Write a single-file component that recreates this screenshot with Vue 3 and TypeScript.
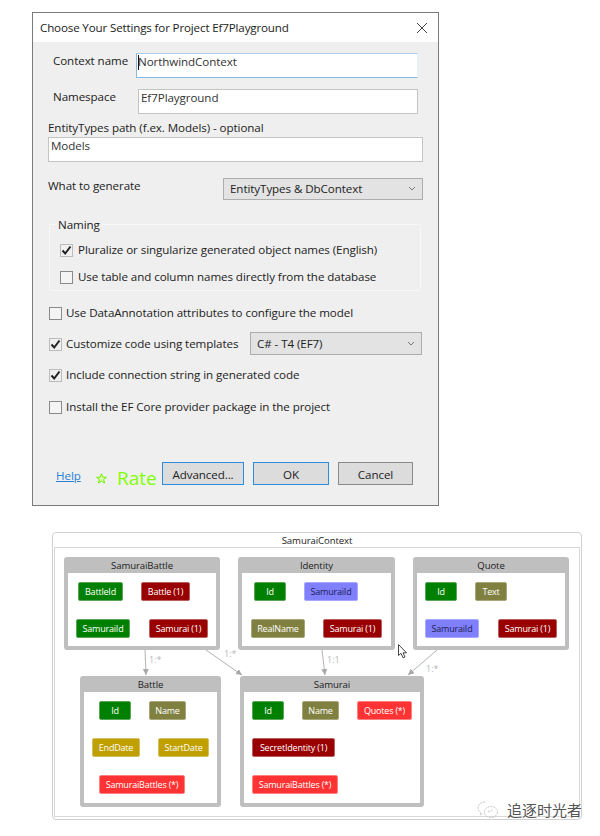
<script setup lang="ts">
interface Chip { t: string; x: number; y: number; w: number; c: string }
interface Node { name: string; x: number; y: number; w: number; h: number; chips: Chip[] }
const G = 'green', R = 'dark', P = 'purple', O = 'olive', Y = 'gold', H = 'hot'
const ox = 53, oy = 533
const nodes: Node[] = [
  { name: 'SamuraiBattle', x: 64, y: 557, w: 156, h: 93, chips: [
    { t: 'BattleId', x: 78, y: 582, w: 45, c: G }, { t: 'Battle (1)', x: 141, y: 582, w: 49, c: R },
    { t: 'SamuraiId', x: 76, y: 619, w: 54, c: G }, { t: 'Samurai (1)', x: 149, y: 619, w: 59, c: R } ] },
  { name: 'Identity', x: 238, y: 557, w: 157, h: 93, chips: [
    { t: 'Id', x: 254, y: 582, w: 32, c: G }, { t: 'SamuraiId', x: 304, y: 582, w: 54, c: P },
    { t: 'RealName', x: 251, y: 619, w: 54, c: O }, { t: 'Samurai (1)', x: 323, y: 619, w: 59, c: R } ] },
  { name: 'Quote', x: 413, y: 557, w: 156, h: 93, chips: [
    { t: 'Id', x: 425, y: 582, w: 32, c: G }, { t: 'Text', x: 475, y: 582, w: 32, c: O },
    { t: 'SamuraiId', x: 425, y: 619, w: 54, c: P }, { t: 'Samurai (1)', x: 498, y: 619, w: 59, c: R } ] },
  { name: 'Battle', x: 80, y: 676, w: 141, h: 131, chips: [
    { t: 'Id', x: 99, y: 701, w: 32, c: G }, { t: 'Name', x: 149, y: 701, w: 37, c: O },
    { t: 'EndDate', x: 92, y: 738, w: 48, c: Y }, { t: 'StartDate', x: 158, y: 738, w: 51, c: Y },
    { t: 'SamuraiBattles (*)', x: 99, y: 775, w: 86, c: H } ] },
  { name: 'Samurai', x: 240, y: 676, w: 184, h: 131, chips: [
    { t: 'Id', x: 252, y: 701, w: 32, c: G }, { t: 'Name', x: 302, y: 701, w: 37, c: O },
    { t: 'Quotes (*)', x: 357, y: 701, w: 55, c: H },
    { t: 'SecretIdentity (1)', x: 252, y: 738, w: 83, c: R },
    { t: 'SamuraiBattles (*)', x: 252, y: 775, w: 86, c: H } ] },
]
const labels = [
  { t: '1:*', x: 149, y: 654 }, { t: '1:*', x: 224, y: 648 },
  { t: '1:1', x: 327, y: 654 }, { t: '1:*', x: 426, y: 663 },
]
const edges = [
  { x1: 145, y1: 650, x2: 146, y2: 675 }, { x1: 206, y1: 650, x2: 242, y2: 675 },
  { x1: 322, y1: 650, x2: 325, y2: 675 }, { x1: 437, y1: 650, x2: 408, y2: 675 },
]
const at = (x: number, y: number, w?: number) => ({
  left: `${x}px`, top: `${y}px`, ...(w ? { width: `${w}px` } : {}),
})
</script>

<template>
  <div class="page">
    <section class="dialog">
      <header class="title">
        <span>Choose Your Settings for Project Ef7Playground</span>
        <svg class="close" width="12" height="12" viewBox="0 0 12 12"><path d="M1 1 11 11M11 1 1 11" stroke="#444" stroke-width="1" fill="none"/></svg>
      </header>
      <div class="body">
        <div class="row first">
          <label class="lab lab-a">Context name</label>
          <div class="input active"><i class="caret"></i>NorthwindContext</div>
        </div>
        <div class="row second">
          <label class="lab lab-b">Namespace</label>
          <div class="input ns">Ef7Playground</div>
        </div>
        <div class="plain path-label">EntityTypes path (f.ex. Models) - optional</div>
        <div class="input full">Models</div>
        <div class="row gen">
          <label class="lab-c">What to generate</label>
          <div class="select sel-a"><span>EntityTypes &amp; DbContext</span>
            <svg width="8" height="5" viewBox="0 0 8 5"><path d="M1 1 4 4 7 1" stroke="#777" fill="none"/></svg>
          </div>
        </div>
        <fieldset class="naming">
          <legend>Naming</legend>
          <div class="check c1"><span class="box on"><svg width="11" height="11" viewBox="0 0 11 11"><path d="M1.5 5.5 4.2 8.5 9.5 1.5" stroke="#222" stroke-width="2" fill="none"/></svg></span>Pluralize or singularize generated object names (English)</div>
          <div class="check c2"><span class="box"></span>Use table and column names directly from the database</div>
        </fieldset>
        <div class="check outer o1"><span class="box"></span>Use DataAnnotation attributes to configure the model</div>
        <div class="check outer o2"><span class="box on"><svg width="11" height="11" viewBox="0 0 11 11"><path d="M1.5 5.5 4.2 8.5 9.5 1.5" stroke="#222" stroke-width="2" fill="none"/></svg></span>Customize code using templates
          <div class="select sel-b"><span>C# - T4 (EF7)</span>
            <svg width="8" height="5" viewBox="0 0 8 5"><path d="M1 1 4 4 7 1" stroke="#777" fill="none"/></svg>
          </div>
        </div>
        <div class="check outer o3"><span class="box on"><svg width="11" height="11" viewBox="0 0 11 11"><path d="M1.5 5.5 4.2 8.5 9.5 1.5" stroke="#222" stroke-width="2" fill="none"/></svg></span>Include connection string in generated code</div>
        <div class="check outer o4"><span class="box"></span>Install the EF Core provider package in the project</div>
        <footer class="foot">
          <a class="help">Help</a>
          <svg class="star" width="11" height="11" viewBox="0 0 11 11"><path d="M5.5 .8 6.8 4.2 10.4 4.3 7.6 6.6 8.6 10.1 5.5 8.1 2.4 10.1 3.4 6.6 .6 4.3 4.2 4.2Z" fill="#e0ffb0" stroke="#70f000" stroke-width="1"/></svg>
          <span class="rate">Rate</span>
          <button class="btn adv blue">Advanced...</button>
          <button class="btn ok blue">OK</button>
          <button class="btn cancel">Cancel</button>
        </footer>
      </div>
    </section>

    <section class="diagram">
      <div class="ctx-title">SamuraiContext</div>
      <div class="ctx-inner"></div>
      <svg class="edges" width="527" height="285" :viewBox="`${ox} ${oy} 527 285`">
        <defs>
          <marker id="arrow" markerWidth="8" markerHeight="8" refX="6" refY="3" orient="auto" markerUnits="userSpaceOnUse">
            <path d="M0 0 6 3 0 6Z" fill="#a8a8a8"/>
          </marker>
        </defs>
        <line v-for="(e, i) in edges" :key="i" :x1="e.x1" :y1="e.y1" :x2="e.x2" :y2="e.y2" stroke="#b4b4b4" stroke-width="1" marker-end="url(#arrow)"/>
      </svg>
      <span v-for="(l, i) in labels" :key="'l' + i" class="edge-label" :style="at(l.x - ox, l.y - oy)">{{ l.t }}</span>
      <article v-for="n in nodes" :key="n.name" class="node" :style="{ ...at(n.x - ox, n.y - oy, n.w), height: `${n.h}px` }">
        <div class="node-title">{{ n.name }}</div>
        <div class="node-body"></div>
        <span v-for="c in n.chips" :key="c.t" class="chip" :class="c.c" :style="at(c.x - n.x, c.y - n.y, c.w)">{{ c.t }}</span>
      </article>
      <svg class="cursor" width="10" height="15" viewBox="0 0 10 15"><path d="M.5.5V11.5L3 9.3 5 13.8 7 13 5 8.8H8.5Z" fill="#fff" stroke="#333" stroke-width=".9"/></svg>
      <div class="mark">
        <svg width="22" height="18" viewBox="0 0 22 18" fill="none" stroke="#c4c4c4" stroke-width="1" stroke-dasharray="2 1">
          <path d="M8 1C3.5 1 1 4 1 7c0 2 1 3.5 2.5 4.5L3 14l3-1.5"/>
          <ellipse cx="14" cy="11" rx="6.5" ry="5.5"/>
          <path d="M11 10l2 1 3-3"/>
        </svg>
        <span>追逐时光者</span>
      </div>
    </section>
  </div>
</template>

<style>
html, body { margin: 0; background: #fff; }
</style>

<style scoped>
.page { width: 600px; height: 836px; overflow: hidden; font-family: "Open Sans", "Noto Sans", sans-serif; color: #222; font-size: 11.6px; }
.dialog { box-sizing: border-box; width: 407px; height: 494px; margin: 12px 0 0 32px; border: 1px solid #7a7a7a; background: #efefef; }
.title { height: 29px; background: #fff; display: flex; align-items: center; justify-content: space-between; padding: 0 10px 0 7px; letter-spacing: -.15px; }
.body { padding: 11px 0 0 15px; position: relative; letter-spacing: -.08px; }
.row { display: flex; }
.lab { margin-left: 5px; height: 16px; line-height: 16px; }
.lab-a { width: 83px; }
.lab-b { width: 85px; }
.second { margin-top: 11px; }
.input { box-sizing: border-box; height: 25px; background: #fff; border: 1px solid #c4c4c4; padding: 0 2px; line-height: 16px; display: block; color: #333; }
.active { width: 282px; border-color: #8ab8e0; border-right-color: #e8f0f8; border-top-color: #a8cdec; padding: 0 1px; position: relative; }
.caret { position: absolute; left: 1px; top: 1px; width: 1px; height: 15px; background: #111; }
.ns { width: 280px; }
.plain { margin-top: 6px; height: 16px; line-height: 16px; }
.full { width: 375px; margin-top: 1px; }
.gen { margin-top: 16px; align-items: flex-start; }
.lab-c { width: 175px; height: 16px; line-height: 16px; }
.select { box-sizing: border-box; display: flex; align-items: center; justify-content: space-between; background: #e3e3e3; border: 1px solid #adadad; padding: 0 6px; }
.sel-a { width: 200px; height: 22px; padding-bottom: 1px; }
.naming { box-sizing: border-box; width: 372px; height: 75px; margin: 16px 0 0 1px; padding: 0; border: 1px solid #f8f8f8; border-radius: 3px; }
legend { margin-left: 6px; padding: 0 2px; height: 16px; line-height: 18px; }
.check { display: flex; align-items: center; height: 16px; line-height: 16px; }
.box { box-sizing: border-box; width: 13px; height: 13px; border: 1px solid #8a8a8a; background: #f4f4f4; margin-right: 5px; display: flex; align-items: center; justify-content: center; flex: none; }
.box.on { border-color: #bbb; background: #f0f0f0; }
.c1 { margin: 10px 0 0 10px; }
.c2 { margin: 11px 0 0 10px; }
.outer { margin-left: 1px; margin-right: 15px; }
.o1 { margin-top: 14px; }
.o2 { margin-top: 15px; }
.o3 { margin-top: 15px; }
.o4 { margin-top: 16px; }
.outer .box { margin-right: 4px; }
.sel-b { width: 172px; height: 23px; margin: -1px 1px 0 auto; }
.foot { margin-top: 47px; display: flex; align-items: flex-start; }
.help { margin: 6px 0 0 8px; width: 40px; color: #2a7fd5; text-decoration: underline; height: 16px; line-height: 16px; }
.star { width: 11px; height: 11px; margin-top: 11px; margin-right: 10px; }
.rate { width: 45px; color: #80ff00; font-size: 19px; line-height: 26px; height: 24px; letter-spacing: 0; margin-top: 3px; }
.btn { box-sizing: border-box; height: 23px; background: #dcdcdc; border: 1px solid #7d7d7d; font: inherit; color: #222; padding: 1px 0 0; letter-spacing: inherit; }
.blue { border-color: #2b8ce0; }
.adv { width: 82px; }
.ok { width: 76px; margin-left: 9px; }
.cancel { width: 75px; margin-left: 9px; border-color: #8a8a8a; }

.diagram { position: relative; box-sizing: border-box; width: 530px; height: 288px; margin: 26px 0 0 52px; border: 1px solid #d0d0d0; border-radius: 4px; background: #fff; }
.ctx-title { height: 15px; line-height: 15px; text-align: center; font-size: 9.6px; color: #222; letter-spacing: -.1px; }
.ctx-inner { position: absolute; left: 1px; right: 1px; top: 14px; bottom: 2px; border: 1px solid #d8d8d8; }
.edges { position: absolute; left: 0; top: 0; }
.edge-label { position: absolute; font-size: 9px; line-height: 12px; color: #b8b8b8; }
.node { position: absolute; box-sizing: border-box; background: #bfbfbf; border-radius: 3px; }
.node-title { height: 16px; line-height: 17px; text-align: center; font-size: 9.6px; color: #222; letter-spacing: -.1px; }
.node-body { position: absolute; left: 4px; right: 4px; top: 16px; bottom: 4px; background: #fff; }
.chip { position: absolute; box-sizing: border-box; height: 19px; line-height: 17px; text-align: center; font-size: 9px; letter-spacing: -.2px; border-radius: 2px; color: #fff; border: 1px solid #d0d0d0; white-space: nowrap; overflow: hidden; }
.green { background: #008000; border-color: #5aa55a; }
.dark { background: #990000; border-color: #b86060; }
.purple { background: #8080ff; color: #1c1c50; border-color: #a8a8ff; }
.olive { background: #808040; border-color: #a6a67a; }
.gold { background: #c0a000; border-color: #d4c060; }
.hot { background: #ff3333; border-color: #ff8080; }
.cursor { position: absolute; left: 345px; top: 111px; }
.mark { position: absolute; left: 424px; top: 268px; display: flex; align-items: center; gap: 8px; }
.mark span { font-family: "Noto Sans CJK SC", sans-serif; font-size: 15px; line-height: 18px; color: #555; white-space: nowrap; text-shadow: 0 0 2px #fff, 0 0 1px #fff; }
</style>
